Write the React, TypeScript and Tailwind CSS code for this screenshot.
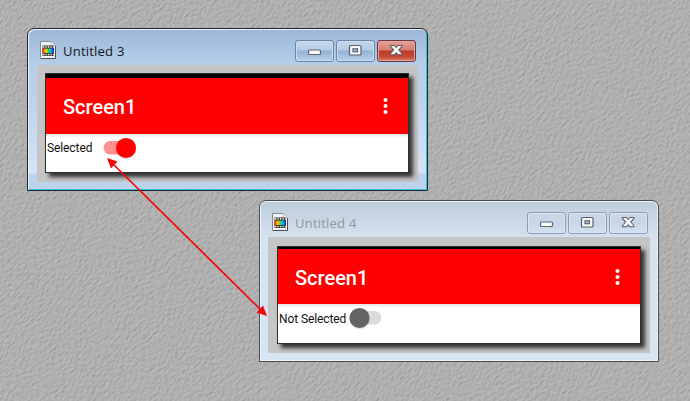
import React from "react";

function PaperTexture() {
  return (
    <svg className="absolute inset-0" width="690" height="401" aria-hidden="true">
      <filter id="paper" x="0" y="0" width="100%" height="100%" colorInterpolationFilters="sRGB">
        <feTurbulence type="fractalNoise" baseFrequency="0.24 0.48" numOctaves="3" seed="8" result="noise" />
        <feDiffuseLighting in="noise" surfaceScale="0.6" diffuseConstant="1.05" lightingColor="#b5b5b5">
          <feDistantLight azimuth="270" elevation="68" />
        </feDiffuseLighting>
      </filter>
      <g transform="rotate(-45 345 200)">
        <rect x="-250" y="-260" width="1190" height="920" fill="#acacac" filter="url(#paper)" />
      </g>
    </svg>
  );
}

function FileIcon() {
  return (
    <svg width="16" height="18" viewBox="0 0 16 18" className="shrink-0">
      <defs>
        <linearGradient id="spectrum">
          <stop offset="0" stopColor="#f01010" />
          <stop offset="0.3" stopColor="#ffd800" />
          <stop offset="0.5" stopColor="#30d830" />
          <stop offset="0.72" stopColor="#10b8ff" />
          <stop offset="1" stopColor="#1010e0" />
        </linearGradient>
      </defs>
      <path d="M.5.5H11l4.500 4.500v12.500H.5z" fill="#f5f5f5" stroke="#85898e" />
      <path d="M1 17.500h14.500V5" fill="none" stroke="#4a4f57" />
      <path d="M11 .5V5h4.500" fill="#fff" stroke="#999" strokeWidth=".7" />
      <rect x="2.500" y="4.500" width="11.500" height="10.500" fill="#3f3f3f" />
      <path d="M3 6h11M3 13.600h11" stroke="#eee" strokeWidth="1.400" strokeDasharray="1.300 1.200" />
      <rect x="2.500" y="7.700" width="11.500" height="4.300" fill="url(#spectrum)" />
    </svg>
  );
}

type Kind = "min" | "max" | "close";

function CaptionButton({ kind, active }: { kind: Kind; active: boolean }) {
  const style = !active
    ? "border-[#8b9bb9] bg-[linear-gradient(#cbd8e6,#c7d6e7_50%,#d2e0ef)] shadow-[inset_0_0_0_1px_#dce6f0]"
    : kind === "close"
      ? "border-[#6d3543] bg-[linear-gradient(#e5a197,#d67f72_45%,#b83826_50%,#c64c36_80%,#dc8064)] shadow-[inset_0_0_0_1px_#e4a49b]"
      : "border-[#6c84a9] bg-[linear-gradient(#c5d8ec,#b5cce5_45%,#94b2d3_50%,#b4d0ec)] shadow-[inset_0_0_0_1px_#cbddef]";
  return (
    <div className={"flex h-[22px] w-[39px] items-center justify-center rounded-[3px] border " + style}>
      <svg width="16" height="14" viewBox="0 0 16 14" className="-translate-x-px -translate-y-px">
        {kind === "min" && <rect x="2.500" y="7" width="12" height="4.500" rx="1" fill="#f8f8f4" stroke="#606676" strokeWidth="1.200" />}
        {kind === "max" && (
          <g stroke="#596074" strokeWidth="1.200">
            <rect x="2.500" y="2.500" width="11.500" height="9.500" rx="1" fill="#f8f8f4" />
            <rect x="6" y="5.800" width="4.500" height="2.900" fill="#aac5e1" />
          </g>
        )}
        {kind === "close" && (
          <path d="M2.500 2.500h4l1.700 2 1.700-2h4v1.200L10.800 7l3.100 3.500v1.300h-4l-1.700-2-1.700 2h-4v-1.300L5.600 7 2.500 3.700z" fill="#f8f8f4" stroke={active ? "#5f5863" : "#596074"} strokeWidth="1.100" strokeLinejoin="round" />
        )}
      </svg>
    </div>
  );
}

function TitleBar({ title, active }: { title: string; active: boolean }) {
  return (
    <div className={"flex h-[36px] items-start pl-3 pt-[11px] " + (active ? "pr-[11px]" : "pr-[10px]")}>
      <div className="pt-[1px]"><FileIcon /></div>
      <div className={"ml-[7px] mt-[2px] whitespace-nowrap font-['Open_Sans','Noto_Sans',sans-serif] text-[13px] leading-[18px] tracking-[0.22px] " + (active ? "text-[#101820]" : "text-[#92979e]")}>{title}</div>
      <div className="ml-auto flex gap-[2px]">
        <CaptionButton kind="min" active={active} />
        <CaptionButton kind="max" active={active} />
        <CaptionButton kind="close" active={active} />
      </div>
    </div>
  );
}

function AppScreen({ selected }: { selected: boolean }) {
  return (
    <div className={"flex w-[364px] flex-col border border-[#303030] bg-white font-[Roboto,sans-serif] shadow-[4px_4px_4px_#333] " + (selected ? "h-[100px]" : "h-[98px]")}>
      <div className={"shrink-0 bg-black " + (selected ? "h-[4px]" : "h-[2px]")} />
      <div className={"flex shrink-0 items-center justify-between bg-[#fe0000] pl-[17px] pr-[20px] text-white " + (selected ? "h-[56px]" : "h-[55px]")}>
        <span className="pt-[2px] text-[20px] font-medium leading-6">Screen1</span>
        <svg width="5" height="18" viewBox="0 0 5 18" fill="white">
          <circle cx="2.500" cy="3" r="2" /><circle cx="2.500" cy="9" r="2" /><circle cx="2.500" cy="15" r="2" />
        </svg>
      </div>
      <div className="flex min-h-0 flex-1 items-start bg-[linear-gradient(#e5e5e5,#fff_4px)] pl-[1px] pt-[2px] text-[12px] tracking-[-0.1px] text-[#111]">
        <span className={"whitespace-nowrap leading-[14px] " + (selected ? "mt-[5px] w-[45px]" : "mt-[6px] w-[67px]")}>{selected ? "Selected" : "Not Selected"}</span>
        <svg width="38" height="25" viewBox="0 0 38 25" className={selected ? "ml-[9px]" : "ml-[1px]"}>
          <rect x="2.500" y="5" width="32" height="13.500" rx="6.750" fill={selected ? "#ff9090" : "#dcdcdc"} />
          <circle cx={selected ? 25 : 12.5} cy="12.700" r="10.200" fill="#888" opacity=".35" />
          <circle cx={selected ? 25 : 12.5} cy="11.900" r="10" fill={selected ? "#fe0000" : "#646464"} />
        </svg>
      </div>
    </div>
  );
}

export default function App() {
  return (
    <main className="relative h-[401px] w-[690px] overflow-hidden bg-[#adadad]">
      <PaperTexture />
      <section className="absolute left-[27px] top-[28px] h-[163px] w-[401px] rounded-t-[7px] border border-[#20262d] bg-[linear-gradient(#9bb7d6,#b7cfea_38px,#bcd2ed_70px,#d5e3f4_144px,#bcd3ed_145px)] shadow-[inset_1px_1px_0_#e8f3fc,inset_-1px_-1px_0_#34c4d4]">
        <TitleBar title="Untitled 3" active />
        <div className="ml-[9px] h-[117px] w-[381px] bg-[#c5c5c5] pl-[8px] pt-[8px]">
          <AppScreen selected />
        </div>
      </section>
      <section className="absolute left-[259px] top-[200px] h-[162px] w-[400px] rounded-t-[7px] border border-[#4a4d50] bg-[linear-gradient(#becddb,#d5e2ef_38px,#d7e4f2)] shadow-[inset_0_0_0_1px_#edf5fc]">
        <TitleBar title="Untitled 4" active={false} />
        <div className="ml-[8px] h-[116px] w-[382px] bg-[#c5c5c5] pl-[9px] pt-[9px]">
          <AppScreen selected={false} />
        </div>
      </section>
      <svg className="absolute inset-0" width="690" height="401" fill="#f50505">
        <path d="M112 163L262 311" stroke="#f50505" strokeWidth="1.700" />
        <path d="M107 158l10.500 3.500-6.500 7z" />
        <path d="M267 316l-10.500-3.500 6.500-7z" />
      </svg>
    </main>
  );
}
